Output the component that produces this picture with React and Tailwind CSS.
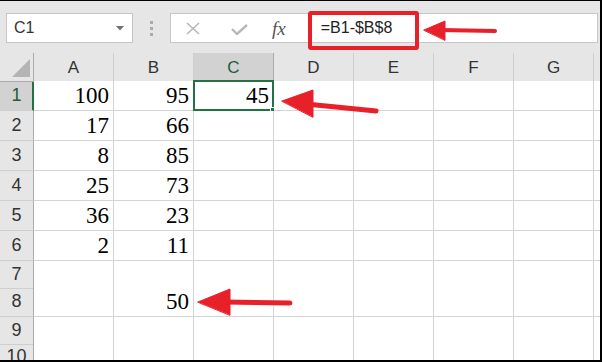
import React from 'react';

const rows = [
  { n: 1, a: '100', b: '95', c: '45', h: 'h-[30px]' },
  { n: 2, a: '17', b: '66', h: 'h-[30px]' },
  { n: 3, a: '8', b: '85', h: 'h-[30px]' },
  { n: 4, a: '25', b: '73', h: 'h-[30px]' },
  { n: 5, a: '36', b: '23', h: 'h-[30px]' },
  { n: 6, a: '2', b: '11', h: 'h-[30px]' },
  { n: 7, h: 'h-[26px]' },
  { n: 8, b: '50', h: 'h-[30px]' },
  { n: 9, h: 'h-[26px]' },
  { n: 10, h: 'h-[26px]' },
];

const cols = ['A', 'B', 'C', 'D', 'E', 'F', 'G'];

const NumCell = ({ value, selected }) => (
  <div className="relative flex items-center justify-end border-r border-b border-[#d4d4d4] bg-white pr-[4px] font-['Liberation_Serif',serif] text-[23px] leading-none text-black">
    {value}
    {selected && (
      <>
        <div className="absolute -top-[1px] -left-[1px] -right-[1px] -bottom-[1px] border-2 border-[#217346]" />
        <div className="absolute -right-[3px] -bottom-[3px] w-[6px] h-[6px] bg-[#217346] border border-white" />
      </>
    )}
  </div>
);

const App = () => {
  return (
    <div className="relative w-[602px] h-[362px] overflow-hidden border-t border-r-2 border-b-2 border-black bg-[#e6e6e6] font-['Liberation_Sans',sans-serif]">
      {/* Name box + formula bar */}
      <div className="flex items-start h-[52px] pt-3 pl-1.5 pr-[2px]">
        <div className="flex items-center justify-between w-[127px] h-[30px] bg-white border border-[#c6c6c6] pl-[7px] pr-[8px]">
          <span className="text-[16px] text-[#333]">C1</span>
          <svg width="8" height="5" viewBox="0 0 8 5">
            <path d="M0 0 L8 0 L4 4.5 Z" fill="#707070" />
          </svg>
        </div>
        <div className="flex flex-col items-center justify-center gap-[3px] w-[37px] h-[30px]">
          <div className="w-[3px] h-[3px] bg-[#aaa]" />
          <div className="w-[3px] h-[3px] bg-[#aaa]" />
          <div className="w-[3px] h-[3px] bg-[#aaa]" />
        </div>
        <div className="flex items-center flex-1 h-[30px] bg-white border border-[#c6c6c6]">
          <svg className="ml-[14px]" width="16" height="13" viewBox="0 0 16 13">
            <path d="M2 1 L14 12 M14 1 L2 12" stroke="#b8b8b8" strokeWidth="1.6" />
          </svg>
          <svg className="ml-[30px] mt-[2px]" width="17" height="11" viewBox="0 0 17 11">
            <path d="M1 5 L6 10 L16 1" stroke="#b8b8b8" strokeWidth="2.4" fill="none" />
          </svg>
          <span className="ml-[24px] font-['Liberation_Serif',serif] italic text-[19px] text-[#555] leading-none">fx</span>
          <span className="ml-[35px] text-[16px] text-[#222]">=B1-$B$8</span>
        </div>
      </div>

      {/* Column headers */}
      <div className="grid grid-cols-[34px_repeat(7,80px)_1fr] h-[28px]">
        <div className="relative border-r border-b border-[#ababab]">
          <svg className="absolute left-[12px] top-[6px]" width="18" height="18" viewBox="0 0 18 18">
            <path d="M18 0 L18 18 L0 18 Z" fill="#b4b4b4" />
          </svg>
        </div>
        {cols.map((c) => (
          <div
            key={c}
            className={`flex items-center justify-center pt-[2px] border-b border-[#ababab] text-[17px] ${
              c === 'C' ? 'bg-[#d2d2d2] text-[#1e5d3a] border-r border-r-[#ababab]' : 'text-[#333] border-r border-r-[#cfcfcf]'
            }`}
          >
            {c}
          </div>
        ))}
        <div className="border-b border-[#ababab]" />
      </div>

      {/* Rows */}
      {rows.map((r) => (
        <div key={r.n} className={`grid grid-cols-[34px_repeat(7,80px)_1fr] ${r.h}`}>
          <div
            className={`flex items-center justify-center border-b border-[#cfcfcf] text-[18px] ${
              r.n === 1 ? 'bg-[#d2d2d2] text-[#1e5d3a] border-r-2 border-r-[#217346] pl-[1px]' : 'text-[#333] border-r border-r-[#ababab]'
            }`}
          >
            {r.n}
          </div>
          <NumCell value={r.a} />
          <NumCell value={r.b} />
          <NumCell value={r.c} selected={r.n === 1} />
          <NumCell />
          <NumCell />
          <NumCell />
          <NumCell />
          <div className="border-b border-[#d4d4d4] bg-white" />
        </div>
      ))}

      {/* Annotations */}
      <div className="absolute left-[308px] top-[10px] w-[111px] h-[39px] border-4 border-[#e8202a] rounded-[3px]" />
      <svg className="absolute left-0 top-[-1px] pointer-events-none" width="602" height="362" viewBox="0 0 602 362">
        <g fill="#e8202a" stroke="#e8202a" strokeLinecap="round">
          <polygon points="424,30 445,21 445,40" strokeWidth="1" />
          <line x1="440" y1="30" x2="495" y2="31" strokeWidth="4" />
          <polygon points="282,101 313,90 313,117" strokeWidth="1" />
          <line x1="306" y1="104" x2="376" y2="111" strokeWidth="5" />
          <polygon points="198,302 230,289 230,315" strokeWidth="1" />
          <line x1="224" y1="302" x2="290" y2="303" strokeWidth="5" />
        </g>
      </svg>
    </div>
  );
};

export default App;
